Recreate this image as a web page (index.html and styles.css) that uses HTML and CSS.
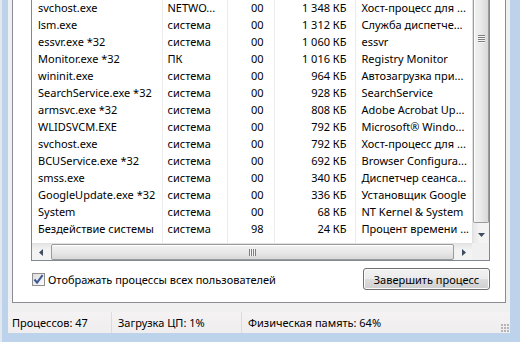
FILE: index.html
```html
<!DOCTYPE html>
<html lang="ru">
<head>
<meta charset="utf-8">
<title>Диспетчер задач Windows</title>
<link rel="stylesheet" href="styles.css">
</head>
<body>
<div class="window">
  <div class="client">
    <div class="tabpage">
      <div class="listbox">
        <div class="rows">
          <table class="proc">
            <colgroup>
              <col class="c-name"><col class="c-user"><col class="c-cpu"><col class="c-mem"><col class="c-desc">
            </colgroup>
            <tbody>
              <tr><td class="name">svchost.exe</td><td class="user">NETWO...</td><td class="cpu">00</td><td class="mem">1 348 КБ</td><td class="desc">Хост-процесс для ...</td></tr>
              <tr><td class="name">lsm.exe</td><td class="user">система</td><td class="cpu">00</td><td class="mem">1 312 КБ</td><td class="desc">Служба диспетче...</td></tr>
              <tr><td class="name">essvr.exe *32</td><td class="user">система</td><td class="cpu">00</td><td class="mem">1 060 КБ</td><td class="desc">essvr</td></tr>
              <tr><td class="name">Monitor.exe *32</td><td class="user">ПК</td><td class="cpu">00</td><td class="mem">1 016 КБ</td><td class="desc">Registry Monitor</td></tr>
              <tr><td class="name">wininit.exe</td><td class="user">система</td><td class="cpu">00</td><td class="mem">964 КБ</td><td class="desc">Автозагрузка при...</td></tr>
              <tr><td class="name">SearchService.exe *32</td><td class="user">система</td><td class="cpu">00</td><td class="mem">928 КБ</td><td class="desc">SearchService</td></tr>
              <tr><td class="name">armsvc.exe *32</td><td class="user">система</td><td class="cpu">00</td><td class="mem">808 КБ</td><td class="desc">Adobe Acrobat Up...</td></tr>
              <tr><td class="name">WLIDSVCM.EXE</td><td class="user">система</td><td class="cpu">00</td><td class="mem">792 КБ</td><td class="desc">Microsoft® Windo...</td></tr>
              <tr><td class="name">svchost.exe</td><td class="user">система</td><td class="cpu">00</td><td class="mem">792 КБ</td><td class="desc">Хост-процесс для ...</td></tr>
              <tr><td class="name">BCUService.exe *32</td><td class="user">система</td><td class="cpu">00</td><td class="mem">692 КБ</td><td class="desc">Browser Configura...</td></tr>
              <tr><td class="name">smss.exe</td><td class="user">система</td><td class="cpu">00</td><td class="mem">340 КБ</td><td class="desc">Диспетчер сеанса...</td></tr>
              <tr><td class="name">GoogleUpdate.exe *32</td><td class="user">система</td><td class="cpu">00</td><td class="mem">336 КБ</td><td class="desc">Установщик Google</td></tr>
              <tr><td class="name">System</td><td class="user">система</td><td class="cpu">00</td><td class="mem">68 КБ</td><td class="desc">NT Kernel &amp; System</td></tr>
              <tr><td class="name">Бездействие системы</td><td class="user">система</td><td class="cpu">98</td><td class="mem">24 КБ</td><td class="desc">Процент времени ...</td></tr>
              <tr class="filler"><td></td><td></td><td></td><td></td><td></td></tr>
            </tbody>
          </table>
        </div>
        <div class="vscroll">
          <div class="vthumb"><span class="vgrip"></span></div>
          <div class="vtrack"></div>
          <div class="sbtn">
            <svg width="7" height="4" viewBox="0 0 7 4"><path d="M0 0h7L3.5 4z" fill="#404c60"/></svg>
          </div>
        </div>
        <div class="hscroll">
          <div class="sbtn">
            <svg width="4" height="7" viewBox="0 0 4 7"><path d="M4 0v7L0 3.5z" fill="#404c60"/></svg>
          </div>
          <div class="hthumb"><span class="hgrip"></span></div>
          <div class="sbtn">
            <svg width="4" height="7" viewBox="0 0 4 7"><path d="M0 0v7l4-3.5z" fill="#404c60"/></svg>
          </div>
        </div>
        <div class="corner"></div>
      </div>
      <div class="actions">
        <label class="check">
          <span class="box">
            <svg width="11" height="11" viewBox="0 0 11 11"><path d="M1.5 5.5l2.6 3.2L9.6 1.2" fill="none" stroke="#3c5894" stroke-width="2"/></svg>
          </span>
          <span>Отображать процессы всех пользователей</span>
        </label>
        <button class="btn" type="button">Завершить процесс</button>
      </div>
    </div>
    <div class="status">
      <div class="pane p1">Процессов: 47</div>
      <div class="pane p2">Загрузка ЦП: 1%</div>
      <div class="pane p3">Физическая память: 64%</div>
      <div class="grip"></div>
    </div>
  </div>
</div>
</body>
</html>
```
FILE: styles.css
```css
html, body {
  margin: 0;
  padding: 0;
}
body {
  width: 520px;
  height: 342px;
  overflow: hidden;
  background: #bdd3eb;
  font-family: "Noto Sans", "Open Sans", sans-serif;
  font-size: 11px;
  color: #000;
}
.window {
  box-sizing: border-box;
  width: 520px;
  height: 342px;
  display: flex;
  border-left: 2px solid #e2e8f0;
  padding: 0 10px 9px 6px;
}
.client {
  flex: 1;
  display: flex;
  flex-direction: column;
  background: #f0f0f0;
}
.tabpage {
  box-sizing: border-box;
  height: 303px;
  margin: 0 4px;
  background: #fff;
  border: 1px solid #898c95;
  border-top: none;
  padding: 0 15px 0 18px;
}
.listbox {
  box-sizing: border-box;
  height: 261px;
  border: 1px solid #828790;
  border-top: none;
  display: grid;
  grid-template-columns: 1fr 17px;
  grid-template-rows: 1fr 17px;
  background: #fff;
}
.rows {
  overflow: hidden;
}
.proc {
  border-collapse: collapse;
  table-layout: fixed;
  width: 460px;
  height: 245px;
  margin-top: -1px;
}
.c-name { width: 130px; }
.c-user { width: 65px; }
.c-cpu { width: 47px; }
.c-mem { width: 81px; }
.c-desc { width: 137px; }
.proc td {
  height: 17px;
  line-height: 17px;
  padding: 0;
  white-space: nowrap;
  overflow: hidden;
  border-right: 1px solid #ececec;
}
.proc tr.filler td { height: auto; }
.proc td.name { padding-left: 6px; }
.proc td.user { padding-left: 5px; }
.proc td.cpu { text-align: right; padding-right: 10px; }
.proc td.mem { text-align: right; padding-right: 8px; }
.proc td.desc { padding-left: 6px; }

.vscroll {
  display: flex;
  flex-direction: column;
  background: linear-gradient(to right, #e6e6e6, #f3f3f3 40%, #f3f3f3);
  border-left: 1px solid #e1e1e1;
}
.vthumb {
  box-sizing: border-box;
  height: 223px;
  border: 1px solid #9b9b9b;
  border-top: none;
  border-radius: 0 0 2px 2px;
  background: linear-gradient(to right, #f2f2f2, #e9e9e9 50%, #d8d8d8);
  box-shadow: inset 1px 0 #fff;
  display: flex;
  justify-content: center;
}
.vgrip {
  margin-top: 35px;
  width: 7px;
  height: 8px;
  background: repeating-linear-gradient(to bottom, #7d7d7d 0 1px, #f6f6f6 1px 2px);
}
.vtrack { flex: 1; }
.sbtn {
  width: 17px;
  height: 17px;
  display: flex;
  align-items: center;
  justify-content: center;
  flex: none;
}
.hscroll {
  display: flex;
  background: linear-gradient(to bottom, #e6e6e6, #f3f3f3 40%, #f3f3f3);
  border-top: 1px solid #e1e1e1;
  box-sizing: border-box;
  height: 17px;
}
.hscroll .sbtn { height: 16px; }
.hthumb {
  flex: 1;
  margin: 0 1px 0 2px;
  box-sizing: border-box;
  border: 1px solid #9b9b9b;
  border-radius: 2px;
  background: linear-gradient(to bottom, #f2f2f2, #e9e9e9 50%, #d8d8d8);
  box-shadow: inset 0 1px #fff;
  display: flex;
  align-items: center;
  justify-content: center;
}
.hgrip {
  width: 7px;
  height: 7px;
  background: repeating-linear-gradient(to right, #7d7d7d 0 1px, #f6f6f6 1px 2px);
}
.corner { background: #f0f0f0; }

.actions {
  display: flex;
  justify-content: space-between;
  align-items: center;
  margin-top: 7px;
}
.check {
  display: flex;
  align-items: center;
  gap: 3px;
  margin-left: 1px;
}
.box {
  box-sizing: border-box;
  width: 13px;
  height: 13px;
  border: 1px solid #8f8f8f;
  background: linear-gradient(135deg, #dcdcdc, #fbfbfb);
  display: flex;
  align-items: center;
  justify-content: center;
}
.box svg { display: block; }
.btn {
  box-sizing: border-box;
  width: 127px;
  height: 22px;
  padding: 0;
  font: inherit;
  color: #000;
  border: 1px solid #707070;
  border-radius: 3px;
  background: linear-gradient(to bottom, #f2f2f2 0%, #ebebeb 50%, #dddddd 51%, #cfcfcf 100%);
  box-shadow: inset 0 0 0 1px #fcfcfc;
}

.status {
  margin-top: 9px;
  height: 21px;
  display: flex;
  align-items: center;
  background: linear-gradient(to bottom, #f4f2f2, #efeded);
  position: relative;
}
.pane {
  box-sizing: border-box;
  height: 21px;
  line-height: 21px;
  white-space: nowrap;
}
.p1 { width: 104px; padding-left: 4px; border-right: 1px solid #dcdcdc; }
.p2 { width: 130px; padding-left: 6px; border-right: 1px solid #dcdcdc; }
.p3 { padding-left: 6px; }
.grip {
  position: absolute;
  right: 1px;
  bottom: 1px;
  width: 8px;
  height: 8px;
  background: radial-gradient(circle at 1px 1px, #b5b5b5 1px, transparent 1.2px) 0 0 / 3px 3px;
}
```
